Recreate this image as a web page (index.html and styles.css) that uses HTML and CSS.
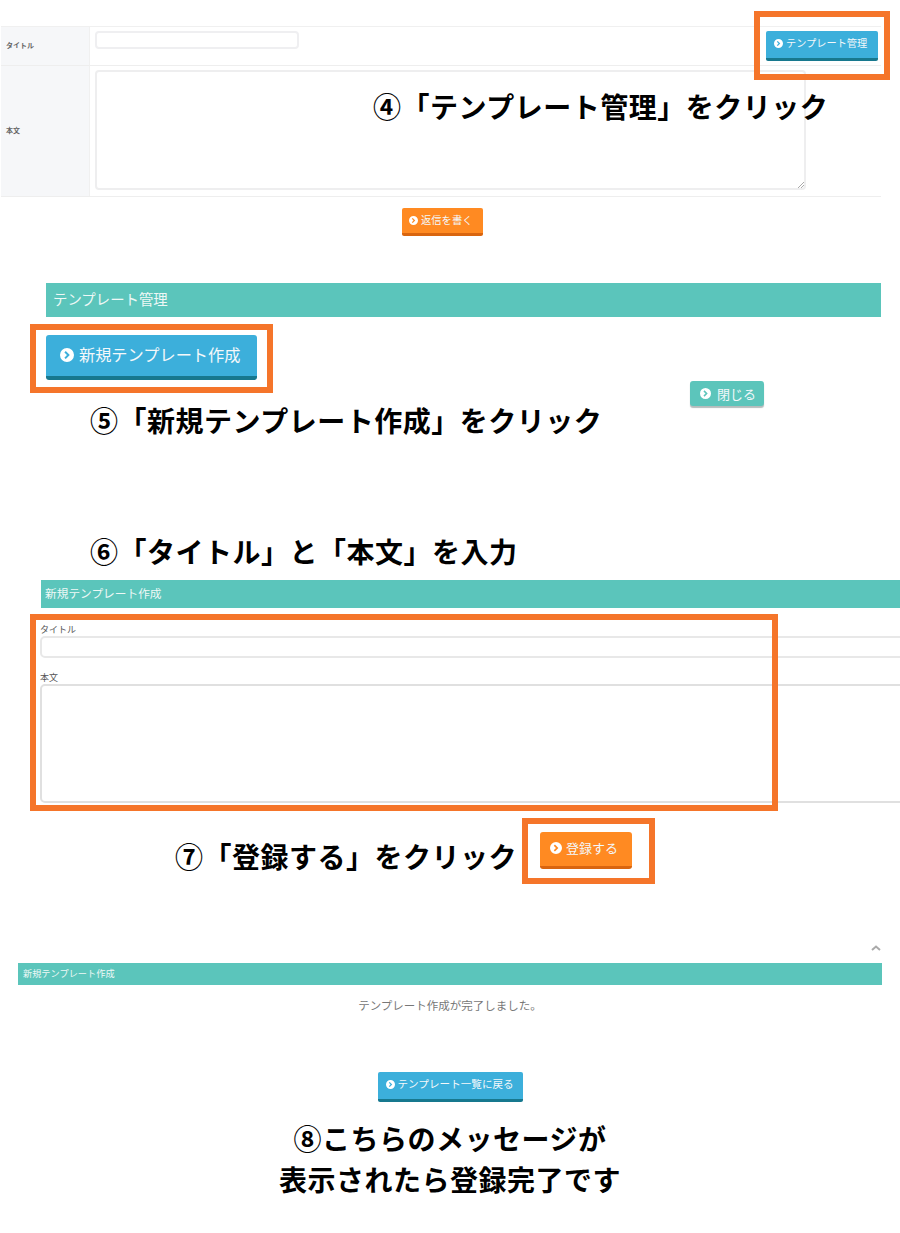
FILE: index.html
```html
<!DOCTYPE html>
<html lang="ja">
<head>
<meta charset="utf-8">
<title>テンプレート登録手順</title>
<link rel="stylesheet" href="styles.css">
</head>
<body>
<svg class="defs" width="0" height="0" aria-hidden="true">
  <symbol id="go" viewBox="0 0 16 16">
    <path fill="#fff" fill-rule="evenodd" d="M8 0a8 8 0 1 1 0 16A8 8 0 0 1 8 0zM6.600 3.400 5 5l3 3-3 3 1.600 1.600L11.200 8z"/>
  </symbol>
</svg>
<main class="sheet">
  <section class="reply">
    <div class="form-table">
      <div class="th th-title">タイトル</div>
      <div class="td td-title">
        <div class="field field-short"></div>
        <a class="btn btn-blue btn-manage"><svg class="ico"><use href="#go"/></svg>テンプレート管理</a>
      </div>
      <div class="th th-body">本文</div>
      <div class="td td-body">
        <div class="field field-area"><svg class="grip" viewBox="0 0 6 6"><path d="M0 6 6 0M3 6 6 3" stroke="#aaa" fill="none"/></svg></div>
      </div>
    </div>
    <div class="center"><a class="btn btn-orange btn-reply"><svg class="ico"><use href="#go"/></svg>返信を書く</a></div>
  </section>

  <section class="manage">
    <h2 class="bar bar-manage">テンプレート管理</h2>
    <a class="btn btn-blue btn-new"><svg class="ico"><use href="#go"/></svg>新規テンプレート作成</a>
    <a class="btn btn-teal btn-close"><svg class="ico"><use href="#go"/></svg>閉じる</a>
  </section>

  <section class="create">
    <h2 class="bar bar-create">新規テンプレート作成</h2>
    <label class="lbl lbl-title">タイトル</label>
    <div class="wide wide-input"></div>
    <label class="lbl lbl-body">本文</label>
    <div class="wide wide-area"></div>
    <a class="btn btn-orange btn-save"><svg class="ico"><use href="#go"/></svg>登録する</a>
  </section>

  <section class="done">
    <svg class="caret" viewBox="0 0 10 6"><path d="M1 5 5 1.500 9 5" fill="none" stroke="#aaa" stroke-width="2"/></svg>
    <h2 class="bar bar-done">新規テンプレート作成</h2>
    <p class="msg">テンプレート作成が完了しました。</p>
    <div class="center"><a class="btn btn-blue btn-back"><svg class="ico"><use href="#go"/></svg>テンプレート一覧に戻る</a></div>
  </section>

  <div class="frame f1"></div>
  <div class="frame f2"></div>
  <div class="frame f3"></div>
  <div class="frame f4"></div>

  <p class="note n4">④「テンプレート管理」をクリック</p>
  <p class="note n5">⑤「新規テンプレート作成」をクリック</p>
  <p class="note n6">⑥「タイトル」と「本文」を入力</p>
  <p class="note n7">⑦「登録する」をクリック</p>
  <p class="note n8">⑧こちらのメッセージが<br>表示されたら登録完了です</p>
</main>
</body>
</html>
```
FILE: styles.css
```css
* { box-sizing: border-box; }
html, body { margin: 0; padding: 0; background: #fff; }
body { font-family: "Noto Sans CJK JP", "Noto Sans", sans-serif; color: #555; }
.defs { position: absolute; }
.sheet { position: relative; width: 900px; height: 1233px; overflow: hidden; }

/* Screenshot 1 */
.reply { padding: 26px 0 0 1px; height: 283px; width: 881px; }
.form-table {
  display: grid; grid-template-columns: 89px 791px; grid-template-rows: 39px 130px;
  border-top: 1px solid #f0f0f0; border-bottom: 1px solid #eee;
}
.th {
  background: #f6f7f9; font-size: 7px; font-weight: 700; color: #666;
  display: flex; align-items: center; padding-left: 5px; border-right: 1px solid #f0f0f0;
}
.th-title { border-bottom: 1px solid #eee; padding-bottom: 2px; }
.th-body { padding-bottom: 2px; }
.td { padding: 4px 0 0 5px; }
.td-title { display: flex; justify-content: space-between; align-items: flex-start; border-bottom: 1px solid #eee; padding-right: 3px; }
.field { background: #fff; border: 2px solid #efeff1; border-radius: 4px; }
.field-short { width: 204px; height: 18px; }
.field-area { position: relative; width: 711px; height: 120px; border-color: #eeeeef; }
.grip { position: absolute; right: 0; bottom: 0; width: 6px; height: 6px; }
.center { display: flex; justify-content: center; }

.btn {
  display: inline-flex; align-items: center; color: #f4f8fa; border-radius: 2px;
  line-height: 1; white-space: nowrap;
}
.ico { flex: none; margin-top: 1px; }
.btn-blue { background: #3cafdb; border-bottom: 3px solid #17788e; }
.btn-orange { background: #ff8a22; border-bottom: 3px solid #d9650f; }
.btn-teal { background: #5cc5bb; border-radius: 3px; box-shadow: 0 2px 1px #b4bcbc; }

.btn-manage { width: 112px; height: 30px; font-size: 10.200px; padding: 0 0 3px 8px; }
.btn-manage .ico { width: 9px; height: 9px; margin-right: 3px; }
.btn-reply { width: 81px; height: 28px; font-size: 10.300px; padding: 0 0 0 7px; margin: 11px 0 0 3px; }
.btn-reply .ico { width: 9px; height: 9px; margin: 0 3px 0 0; }

/* Screenshot 2 */
.manage { position: relative; height: 297px; padding-left: 46px; }
.bar { margin: 0; background: #5bc5bb; color: #eef8f6; font-weight: 400; display: flex; align-items: center; }
.bar-manage { width: 835px; height: 34px; font-size: 14.400px; padding: 0 0 4px 7px; }
.btn-new { margin-top: 18px; width: 211px; height: 45px; font-size: 16.200px; padding: 0 0 2px 14px; border-bottom-width: 4px; border-radius: 3px; }
.btn-new .ico { width: 14px; height: 14px; margin: 1px 5px 0 0; }
.btn-close { position: absolute; left: 690px; top: 98px; width: 74px; height: 25px; font-size: 13px; padding: 0 0 1px 10px; }
.btn-close .ico { width: 11px; height: 11px; margin-right: 6px; }

/* Screenshot 3 */
.create { position: relative; height: 383px; padding-left: 41px; }
.bar-create { width: 859px; height: 28px; font-size: 11.700px; padding: 0 0 3px 4px; }
.lbl { display: block; font-size: 9px; line-height: 13px; color: #555; margin-left: -1px; }
.lbl-title { margin-top: 15px; }
.lbl-body { margin-top: 13px; }
.wide { width: 870px; margin-left: -1px; background: #fff; border: 2px solid #e8e8e8; border-radius: 5px; }
.wide-input { height: 22px; }
.wide-area { height: 119px; border-color: #e0e0e0; }
.btn-save { position: absolute; left: 540px; top: 252px; width: 92px; height: 37px; font-size: 13px; padding: 0 0 3px 10px; border-radius: 3px; }
.btn-save .ico { width: 12px; height: 12px; margin-right: 4px; }

/* Screenshot 4 */
.done { position: relative; padding-left: 18px; }
.caret { position: absolute; left: 871px; top: -18px; width: 10px; height: 6px; }
.bar-done { width: 864px; height: 22px; font-size: 9.200px; padding: 0 0 2px 5px; }
.msg { margin: 11px 0 0 -18px; text-align: center; font-size: 11.500px; line-height: 18px; color: #777; }
.btn-back { width: 145px; height: 30px; font-size: 10.600px; padding: 0 0 3px 8px; margin: 58px 0 0 -18px; }
.btn-back .ico { width: 9px; height: 9px; margin-right: 3px; }

/* Overlaid annotations */
.frame { position: absolute; border: 6px solid #f5752a; }
.f1 { left: 754px; top: 11px; width: 136px; height: 69px; }
.f2 { left: 30px; top: 324px; width: 243px; height: 69px; }
.f3 { left: 30px; top: 614px; width: 748px; height: 197px; }
.f4 { left: 522px; top: 818px; width: 133px; height: 66px; }

.note {
  position: absolute; margin: 0; color: #000; font-weight: 700; font-size: 28px;
  line-height: 41px; letter-spacing: 0.500px; white-space: nowrap;
}
.n4 { left: 373px; top: 86px; }
.n5 { left: 90px; top: 400px; }
.n6 { left: 90px; top: 531px; }
.n7 { left: 175px; top: 836px; }
.n8 { left: 0; width: 900px; top: 1118px; text-align: center; }
```
